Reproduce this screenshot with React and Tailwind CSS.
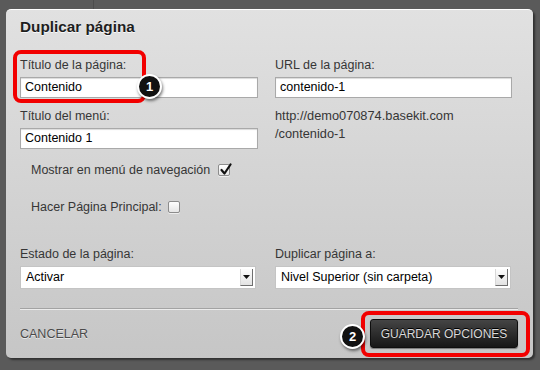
import React from 'react';

const font = { fontFamily: '"Liberation Sans", Arial, Helvetica, sans-serif' };

function Field({ value, className = '' }) {
  return (
    <div
      className={
        'h-[21px] bg-white border border-[#a9a9a9] shadow-[inset_0_1px_1px_rgba(0,0,0,0.15)] px-[4px] flex items-center text-[12.5px] text-black ' +
        className
      }
    >
      {value}
    </div>
  );
}

function Select({ value }) {
  return (
    <div className="h-[23px] bg-white border border-[#c4c4c4] flex items-center pl-[5px] pr-[2px] text-[12.5px] text-black">
      <span className="flex-1">{value}</span>
      <span className="w-[13px] h-[17px] border-r border-b border-[#6f6f6f] border-l border-l-[#d8d8d8] bg-gradient-to-b from-[#fdfdfd] to-[#e3e3e3] flex items-center justify-center">
        <svg width="7" height="4" viewBox="0 0 7 4">
          <path d="M0 0 L7 0 L3.5 4 Z" fill="#111" />
        </svg>
      </span>
    </div>
  );
}

function Checkbox({ checked }) {
  return (
    <span className="relative inline-flex w-[12px] h-[12px] bg-gradient-to-b from-white to-[#e6e6e6] border border-[#8c8c8c] rounded-[2px] shadow-[0_1px_0_rgba(255,255,255,0.6)]">
      {checked && (
        <svg className="absolute left-[1px] -top-[2px]" width="12" height="13" viewBox="0 0 12 13">
          <path d="M1.5 7 L4.5 10.5 L10.5 1.5" stroke="#111" strokeWidth="2.2" fill="none" strokeLinecap="round" strokeLinejoin="round" />
        </svg>
      )}
    </span>
  );
}

function Badge({ n, className }) {
  return (
    <div
      className={
        'absolute w-[25px] h-[25px] rounded-full bg-[#111] border-2 border-white shadow-[1px_2px_3px_rgba(0,0,0,0.5)] flex items-center justify-center text-white text-[13px] font-bold ' +
        className
      }
    >
      {n}
    </div>
  );
}

const Label = ({ children, className = '' }) => (
  <div className={'text-[12.5px] leading-[14px] text-[#363636] ' + className}>{children}</div>
);

export default function App() {
  return (
    <div className="relative w-[540px] h-[370px] bg-[#5a5a5a] pt-[9px] pl-[6px] overflow-hidden" style={font}>
      <div className="absolute left-[93px] top-0 w-px h-[9px] bg-[#4c4c4c]" />
      <div className="relative w-[527px] h-[349px] rounded-[5px] bg-gradient-to-b from-[#e1e1e1] to-[#c6c6c6] border-t border-t-white shadow-[2px_2px_2px_rgba(0,0,0,0.45)] pl-[14px] pr-[15px] pt-[8px]">
        <div className="text-[15.3px] leading-[18px] font-bold text-[#1e1e1e] [text-shadow:0_1px_0_rgba(255,255,255,0.8)]">
          Duplicar página
        </div>

        <div className="grid grid-cols-[238px_237px] gap-x-[17px] mt-[22px]">
          <div>
            <Label>Título de la página:</Label>
            <Field value="Contenido" className="mt-[5px]" />
          </div>
          <div>
            <Label>URL de la página:</Label>
            <Field value="contenido-1" className="mt-[5px]" />
          </div>
        </div>

        <div className="grid grid-cols-[238px_237px] gap-x-[17px] mt-[11px]">
          <div>
            <Label>Título del menú:</Label>
            <Field value="Contenido 1" className="mt-[5px] h-[20px]" />
          </div>
          <div className="text-[12.8px] leading-[18px] text-[#363636] -mt-[2px]">
            <div>http://demo070874.basekit.com</div>
            <div>/contenido-1</div>
          </div>
        </div>

        <div className="pl-[11px] mt-[14px] flex items-center gap-[8px]">
          <Label>Mostrar en menú de navegación</Label>
          <Checkbox checked />
        </div>
        <div className="pl-[11px] mt-[23px] flex items-center gap-[6px]">
          <Label>Hacer Página Principal:</Label>
          <Checkbox />
        </div>

        <div className="grid grid-cols-[236px_236px] gap-x-[19px] mt-[33px]">
          <div>
            <Label>Estado de la página:</Label>
            <div className="mt-[5px]">
              <Select value="Activar" />
            </div>
          </div>
          <div>
            <Label>Duplicar página a:</Label>
            <div className="mt-[5px]">
              <Select value="Nivel Superior (sin carpeta)" />
            </div>
          </div>
        </div>

        <div className="mt-[19px] h-[2px] border-t border-t-[#a3a3a3] border-b border-b-[#ececec]" />

        <div className="mt-[9px] flex items-center justify-between">
          <span className="text-[12.5px] leading-[14px] text-[#4a4a4a] [text-shadow:0_1px_0_rgba(255,255,255,0.6)]">CANCELAR</span>
          <button className="w-[148px] h-[29px] rounded-[3px] bg-gradient-to-b from-[#454545] to-[#171717] border border-[#0e0e0e] shadow-[0_1px_1px_rgba(0,0,0,0.4)] text-[12px] text-[#dadada] [text-shadow:0_-1px_0_#000]">
            GUARDAR OPCIONES
          </button>
        </div>

        <div className="absolute left-[7px] top-[40px] w-[133px] h-[53px] rounded-[8px] border-[4px] border-[#f20000]" />
        <Badge n="1" className="left-[131px] top-[64px]" />

        <div className="absolute left-[355px] top-[301px] w-[169px] h-[46px] rounded-[8px] border-[4px] border-[#f20000]" />
        <Badge n="2" className="left-[334px] top-[314px]" />
      </div>
    </div>
  );
}
